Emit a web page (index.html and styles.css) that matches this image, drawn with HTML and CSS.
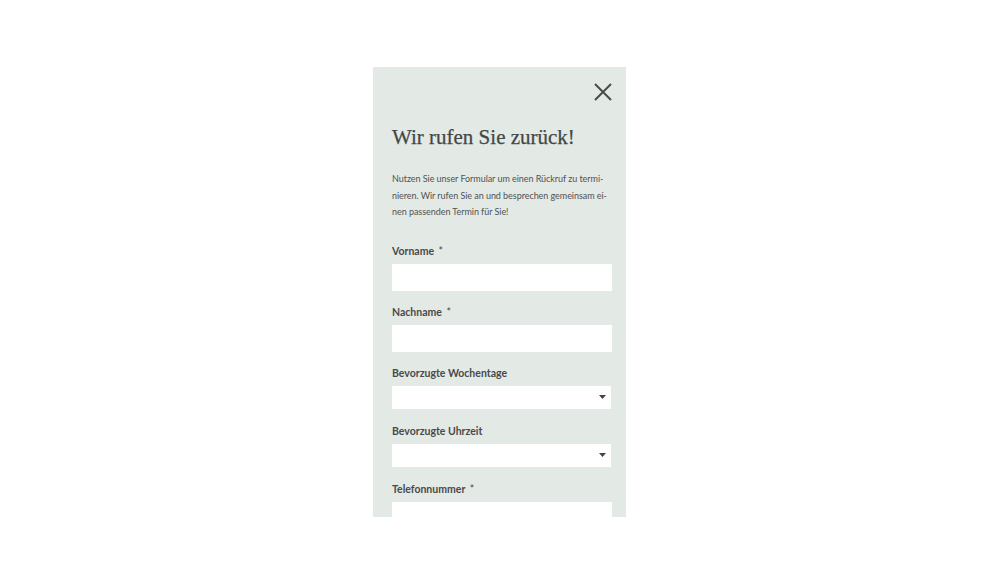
FILE: index.html
```html
<!DOCTYPE html>
<html lang="de">
<head>
<meta charset="utf-8">
<title>Rückruf</title>
<link rel="stylesheet" href="styles.css">
</head>
<body>
<div class="modal">
  <div class="modal-head">
    <button class="close" type="button" aria-label="Schließen">
      <svg width="18" height="18" viewBox="0 0 18 18"><path d="M1 1L17 17M17 1L1 17" stroke="#4a4a4a" stroke-width="2" fill="none"/></svg>
    </button>
  </div>
  <h2 class="title">Wir rufen Sie zurück!</h2>
  <p class="intro"><span>Nutzen Sie unser Formular um einen Rückruf zu termi-</span><span>nieren. Wir rufen Sie an und besprechen gemeinsam ei-</span><span>nen passenden Termin für Sie!</span></p>
  <form class="form">
    <div class="group">
      <label class="label">Vorname <span class="req">*</span></label>
      <input class="field" type="text">
    </div>
    <div class="group">
      <label class="label">Nachname <span class="req">*</span></label>
      <input class="field" type="text">
    </div>
    <div class="group group-select">
      <label class="label">Bevorzugte Wochentage</label>
      <div class="select">
        <svg width="7" height="4" viewBox="0 0 7 4"><path d="M0 0H7L3.5 4Z" fill="#444"/></svg>
      </div>
    </div>
    <div class="group group-select">
      <label class="label">Bevorzugte Uhrzeit</label>
      <div class="select">
        <svg width="7" height="4" viewBox="0 0 7 4"><path d="M0 0H7L3.5 4Z" fill="#444"/></svg>
      </div>
    </div>
    <div class="group">
      <label class="label">Telefonnummer <span class="req">*</span></label>
      <input class="field" type="text">
    </div>
  </form>
</div>
</body>
</html>
```
FILE: styles.css
```css
html, body {
  margin: 0;
  padding: 0;
  background: #ffffff;
}
body {
  font-family: Lato, "Open Sans", sans-serif;
  color: #4a4a4a;
}
.modal {
  width: 253px;
  height: 450px;
  margin: 67px 0 0 calc(50% - 127px);
  box-sizing: border-box;
  padding: 0 14px 0 19px;
  background: #e3e9e5;
  overflow: hidden;
}
.modal-head {
  display: flex;
  justify-content: flex-end;
  padding-top: 16px;
}
.close {
  display: block;
  width: 18px;
  height: 18px;
  padding: 0;
  margin: 0;
  border: 0;
  background: transparent;
}
.close svg {
  display: block;
}
.title {
  margin: 22px 0 0;
  font-family: "Liberation Serif", "DejaVu Serif", serif;
  font-weight: 400;
  font-size: 21px;
  line-height: 28px;
  color: #434845;
  white-space: nowrap;
  -webkit-text-stroke: 0.25px #434845;
}
.intro {
  margin: 20px 0 0;
  font-size: 9px;
  line-height: 16.5px;
  letter-spacing: -0.05px;
  color: #525252;
}
.intro span {
  display: block;
  white-space: nowrap;
}
.form {
  margin-top: 22px;
}
.group {
  margin-bottom: 13px;
}
.group-select {
  margin-bottom: 14px;
}
.label {
  display: block;
  font-size: 10.5px;
  font-weight: 700;
  line-height: 16px;
  margin-bottom: 5px;
  color: #4a4a4a;
}
.req {
  font-weight: 400;
  margin-left: 2px;
}
.field {
  display: block;
  width: 100%;
  height: 27px;
  box-sizing: border-box;
  margin: 0;
  border: 0;
  background: #ffffff;
}
.select {
  display: flex;
  align-items: center;
  justify-content: flex-end;
  width: 219px;
  height: 23px;
  box-sizing: border-box;
  padding-right: 5px;
  background: #ffffff;
}
.select svg {
  display: block;
}
```
